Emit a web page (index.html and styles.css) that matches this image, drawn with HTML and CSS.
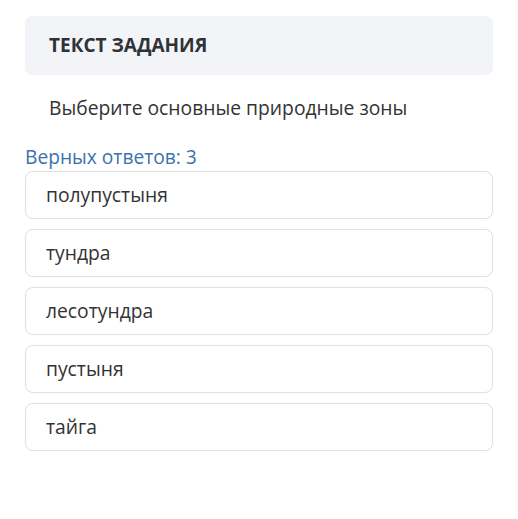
FILE: index.html
```html
<!DOCTYPE html>
<html lang="ru">
<head>
    <meta charset="UTF-8">
    <meta name="viewport" content="width=device-width, initial-scale=1.0">
    <title>Текст задания</title>
    <link rel="stylesheet" href="styles.css">
</head>
<body>
    <div class="task">
        <!-- Заголовок -->
        <div class="task-header">ТЕКСТ ЗАДАНИЯ</div>
        <p class="task-question">Выберите основные природные зоны</p>

        <!-- Варианты ответа -->
        <div class="answers-count">Верных ответов: 3</div>
        <div class="answers">
            <div class="answer">полупустыня</div>
            <div class="answer">тундра</div>
            <div class="answer">лесотундра</div>
            <div class="answer">пустыня</div>
            <div class="answer">тайга</div>
        </div>
    </div>
</body>
</html>
```

FILE: styles.css
```css
body {
    font-family: "Open Sans", Arial, sans-serif;
    background-color: #fff;
    margin: 0;
    color: #333;
}
.task {
    padding: 16px 25px;
}
.task-header {
    background-color: #f3f4f7;
    border-radius: 7px;
    height: 59px;
    line-height: 59px;
    padding: 0 24px;
    font-size: 19px;
    font-weight: 700;
    color: #2f3237;
}
.task-question {
    margin: 19px 0 0;
    padding: 0 24px;
    font-size: 19.3px;
    line-height: 28px;
    color: #333;
}
.answers-count {
    margin-top: 23px;
    font-size: 19.2px;
    line-height: 24px;
    color: #3b72ad;
}
.answers {
    display: flex;
    flex-direction: column;
    gap: 10px;
    margin-top: 2px;
}
.answer {
    border: 1px solid #e0e1e3;
    border-radius: 8px;
    box-shadow: 0 0 1px rgba(0, 0, 0, 0.08);
    height: 46px;
    line-height: 46px;
    padding: 0 20px;
    font-size: 19.3px;
    color: #333;
}
```
